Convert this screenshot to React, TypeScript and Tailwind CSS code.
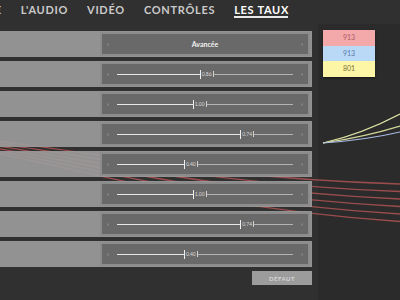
import React from "react";

const tabs = ["GÉNÉRALE", "L'AUDIO", "VIDÉO", "CONTRÔLES", "LES TAUX"];

const sliders = [
  { pos: 0.47, label: "0.86" },
  { pos: 0.43, label: "1.00" },
  { pos: 0.7, label: "0.74" },
  { pos: 0.38, label: "0.40" },
  { pos: 0.43, label: "1.00" },
  { pos: 0.7, label: "0.74" },
  { pos: 0.38, label: "0.40" },
];

function Chart() {
  const reds = [0, 1, 2, 3, 4, 5];
  return (
    <svg className="absolute inset-0" width="400" height="300" viewBox="0 0 400 300">
      <rect x="318" y="24" width="82" height="276" fill="#2b2b2b" />
      {reds.map(i => (
        <path
          key={i}
          d={`M -30 ${138 + i * 2} C 90 ${150 + i * 4}, 200 ${178 + i * 6}, 400 ${184 + i * 7.5}`}
          fill="none"
          stroke="#c25858"
          strokeOpacity="0.75"
          strokeWidth="1.3"
        />
      ))}
      <path d="M 323 143 Q 362 134 400 114" fill="none" stroke="#dfe3a4" strokeWidth="1.2" />
      <path d="M 323 143 Q 364 137 400 126" fill="none" stroke="#d7dc9c" strokeWidth="1.2" />
      <path d="M 323 143 Q 366 140 400 132" fill="none" stroke="#a9bde4" strokeWidth="1.2" />
    </svg>
  );
}

function Arrow({ dir }: { dir: "l" | "r" }) {
  return (
    <span className="w-[4px] text-[6px] leading-none text-[#c4c4c4] text-center">{dir === "l" ? "‹" : "›"}</span>
  );
}

function Row({ children }: { children: React.ReactNode }) {
  return (
    <div className="h-[26px] bg-[#9d9d9d]/90 flex items-center">
      <div className="ml-[100px] w-[210px] h-[24px] p-[2px] bg-[#8c8c8c]">
        <div className="h-full bg-[#696969] flex items-center px-[4px]">{children}</div>
      </div>
    </div>
  );
}

function Slider({ pos, label }: { pos: number; label: string }) {
  return (
    <>
      <Arrow dir="l" />
      <div className="relative flex-1 mx-[7px] h-[9px] flex items-center">
        <div className="h-[1px] bg-[#e6e6e6]" style={{ width: `${pos * 100}%` }} />
        <div className="h-[1px] flex-1 bg-[#b4b4b4]" />
        <div className="absolute top-0 h-[9px] flex items-center" style={{ left: `${pos * 100}%` }}>
          <div className="w-[1px] h-[9px] bg-[#f0f0f0]" />
          <span className="px-[1px] text-[5px] leading-none text-[#dcdcdc] bg-[#696969]">{label}</span>
          <div className="w-[1px] h-[6px] bg-[#cfcfcf]" />
        </div>
      </div>
      <Arrow dir="r" />
    </>
  );
}

export default function App() {
  return (
    <div className="relative w-[400px] h-[300px] overflow-hidden bg-[#303030] font-['Lato',sans-serif]">
      <Chart />

      <header className="relative h-[24px]">
        <nav className="absolute right-[111px] top-0 pt-[4px] flex items-start gap-[19px] whitespace-nowrap">
          {tabs.map(t => {
            const active = t === "LES TAUX";
            return (
              <span
                key={t}
                className={`relative text-[11px] leading-[11px] font-bold tracking-[0.7px] ${active ? "text-white" : "text-[#cacaca]"}`}
              >
                {t}
                {active && <span className="absolute left-0 right-[1px] top-[12px] h-[2px] bg-[#e8e8e8]" />}
              </span>
            );
          })}
        </nav>
      </header>

      <div className="relative mt-[7px] w-[312px] flex flex-col gap-[4px]">
        <Row>
          <Arrow dir="l" />
          <span className="flex-1 text-center text-[7px] font-bold text-[#f2f2f2]">Avancée</span>
          <Arrow dir="r" />
        </Row>
        {sliders.map((s, i) => (
          <Row key={i}>
            <Slider pos={s.pos} label={s.label} />
          </Row>
        ))}
      </div>

      <div className="relative w-[312px] mt-[4px] flex justify-end">
        <button className="w-[60px] h-[14px] bg-[#9c9c9c] text-[6px] font-bold tracking-[0.5px] text-[#d4d4d4]">
          DÉFAUT
        </button>
      </div>

      <div className="absolute left-[323px] top-[30px] w-[52px] flex flex-col shadow-[0_1px_2px_rgba(0,0,0,0.5)] text-[7px] text-center leading-[15.7px]">
        <div className="bg-[#f3a9aa] text-[#b05a68]">913</div>
        <div className="bg-[#b9d9f7] text-[#5a7aa6]">913</div>
        <div className="bg-[#fcf6a6] text-[#7a7436]">801</div>
      </div>
    </div>
  );
}
